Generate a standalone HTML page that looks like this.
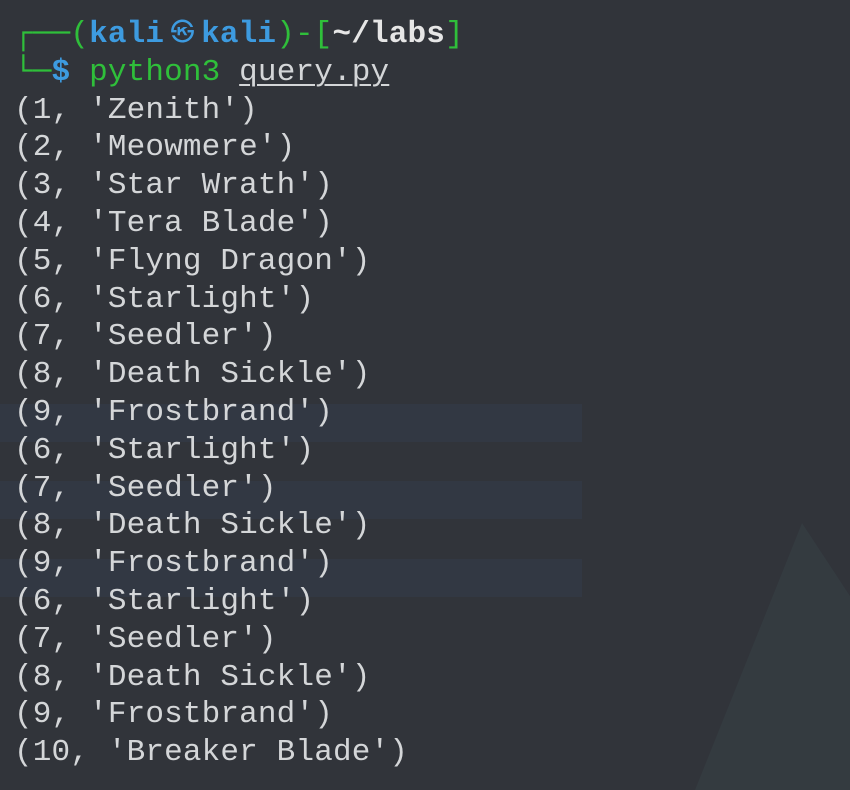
<!DOCTYPE html>
<html><head><meta charset="utf-8"><style>
html,body{margin:0;padding:0}
body{width:850px;height:790px;background:#31343a;position:relative;overflow:hidden}
.band{position:absolute;left:0;width:582px;height:38px;background:#323843}
.tri{position:absolute;left:0;top:0}
pre{position:absolute;left:14px;top:16px;margin:0;font-family:"Liberation Mono","DejaVu Sans Mono",monospace;font-size:31px;line-height:37.8px;letter-spacing:0.16px;color:#d4d6d8}
.g{color:#2fbf3a}.b{color:#3d9be0;font-weight:bold}.w{color:#e6e6e6;font-weight:bold}
.k{display:inline-block;width:37px;text-align:center;font-size:24px;font-weight:normal;vertical-align:2px}
.u{text-decoration:underline;text-underline-offset:4px;text-decoration-thickness:2px}
</style></head><body>
<div class="band" style="top:404px"></div>
<div class="band" style="top:481px"></div>
<div class="band" style="top:559px"></div>
<svg class="tri" width="850" height="790"><polygon points="802,523 850,596 850,790 695,790" fill="#343b40"/></svg>
<pre><span class="g">┌──(</span><span class="b">kali<span class="k">㉿</span>kali</span><span class="g">)-[</span><span class="w">~/labs</span><span class="g">]</span>
<span class="g">└─</span><span class="b">$</span> <span class="g">python3</span> <span class="u">query.py</span>
(1, 'Zenith')
(2, 'Meowmere')
(3, 'Star Wrath')
(4, 'Tera Blade')
(5, 'Flyng Dragon')
(6, 'Starlight')
(7, 'Seedler')
(8, 'Death Sickle')
(9, 'Frostbrand')
(6, 'Starlight')
(7, 'Seedler')
(8, 'Death Sickle')
(9, 'Frostbrand')
(6, 'Starlight')
(7, 'Seedler')
(8, 'Death Sickle')
(9, 'Frostbrand')
(10, 'Breaker Blade')</pre>
</body></html>
